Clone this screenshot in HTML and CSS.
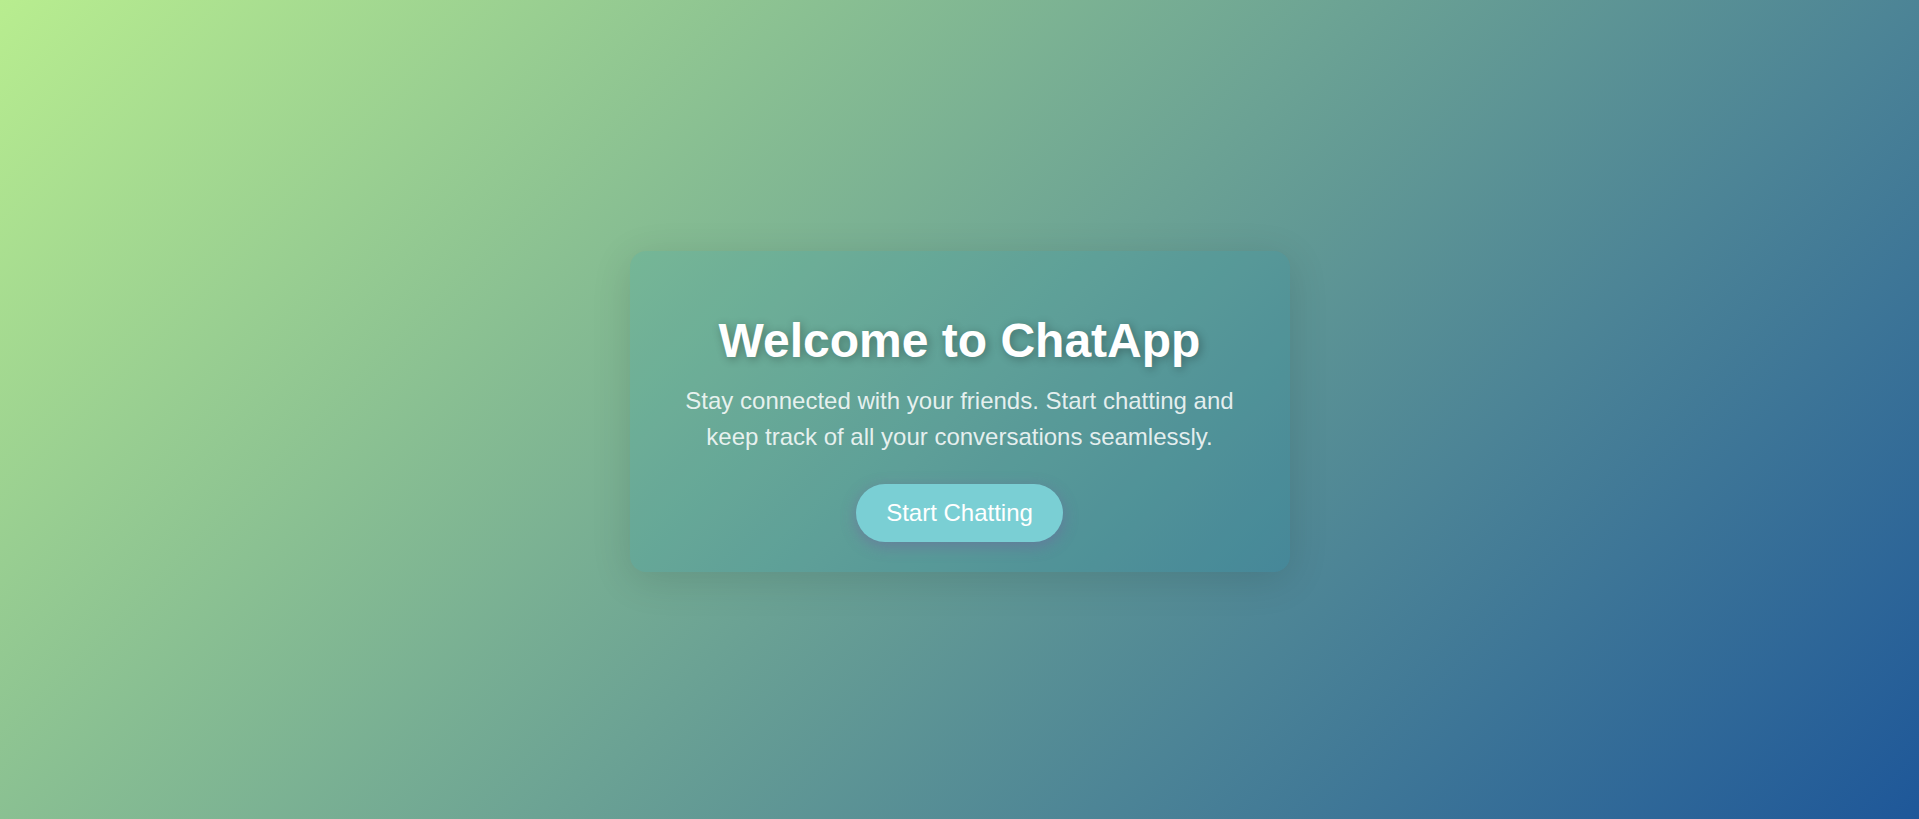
FILE: index.html
```html
<!DOCTYPE html>
<html lang="en">
<head>
<meta charset="UTF-8">
<title>ChatApp</title>
<link rel="stylesheet" href="styles.css">
</head>
<body>
  <main class="page">
    <section class="card">
      <h1 class="title">Welcome to ChatApp</h1>
      <p class="lead">Stay connected with your friends. Start chatting and keep track of all your conversations seamlessly.</p>
      <div class="actions">
        <button class="btn" type="button">Start Chatting</button>
      </div>
    </section>
  </main>
</body>
</html>
```

FILE: styles.css
```css
html, body {
  margin: 0;
  padding: 0;
  height: 100%;
}

body {
  font-family: "Liberation Sans", Arial, sans-serif;
  background: linear-gradient(135deg, #b8ed8f 0%, #1e5799 100%);
  color: #fff;
}

.page {
  min-height: 100vh;
  display: flex;
  align-items: center;
  justify-content: center;
}

.card {
  width: 600px;
  padding: 30px;
  border-radius: 16px;
  background: rgba(0, 140, 180, 0.12);
  box-shadow: 0 8px 40px rgba(0, 0, 0, 0.12);
  text-align: center;
  margin-top: 4px;
}

.title {
  font-size: 48px;
  font-weight: 700;
  margin: 32px 0 15px;
  text-shadow: 2px 2px 10px rgba(0, 0, 0, 0.3);
}

.lead {
  font-size: 24px;
  line-height: 36px;
  margin: 0 0 29px;
  color: rgba(255, 255, 255, 0.85);
}

.actions {
  display: flex;
  justify-content: center;
}

.btn {
  font-family: "Liberation Sans", Arial, sans-serif;
  font-size: 24px;
  color: #fff;
  background: #7acfd4;
  border: none;
  border-radius: 30px;
  padding: 15px 30px;
  box-shadow: 0 4px 15px rgba(120, 90, 160, 0.45);
  cursor: pointer;
}
```
